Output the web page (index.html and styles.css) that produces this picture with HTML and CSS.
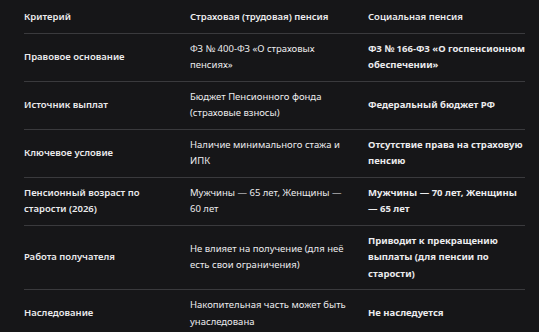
FILE: index.html
```html
<!DOCTYPE html>
<html lang="ru">
<head>
<meta charset="utf-8">
<link rel="stylesheet" href="styles.css">
</head>
<body>
<div class="wrap">
<table class="cmp">
<colgroup><col class="c1"><col class="c2"><col class="c3"></colgroup>
<thead>
<tr><th>Критерий</th><th>Страховая (трудовая) пенсия</th><th class="s">Социальная пенсия</th></tr>
</thead>
<tbody>
<tr><td class="k">Правовое основание</td><td>ФЗ № 400-ФЗ «О страховых пенсиях»</td><td class="s">ФЗ № 166-ФЗ «О госпенсионном обеспечении»</td></tr>
<tr><td class="k">Источник выплат</td><td>Бюджет Пенсионного фонда (страховые взносы)</td><td class="s">Федеральный бюджет РФ</td></tr>
<tr><td class="k">Ключевое условие</td><td>Наличие минимального стажа и ИПК</td><td class="s">Отсутствие права на страховую пенсию</td></tr>
<tr><td class="k">Пенсионный возраст по старости (2026)</td><td>Мужчины — 65 лет, Женщины — 60 лет</td><td class="s">Мужчины — 70 лет, Женщины — 65 лет</td></tr>
<tr><td class="k">Работа получателя</td><td>Не влияет на получение (для неё есть свои ограничения)</td><td class="s">Приводит к прекращению выплаты (для пенсии по старости)</td></tr>
<tr><td class="k">Наследование</td><td>Накопительная часть может быть унаследована</td><td class="s">Не наследуется</td></tr>
</tbody>
</table>
</div>
</body>
</html>
```
FILE: styles.css
```css
html, body {
  margin: 0;
  padding: 0;
  background: #161618;
}
.wrap {
  padding: 0 14px 0 24px;
}
.cmp {
  width: 501px;
  border-collapse: collapse;
  table-layout: fixed;
  font-family: "Noto Sans", "Open Sans", sans-serif;
  font-size: 9.5px;
  line-height: 16.5px;
  color: #ececee;
}
.c1 { width: 166px; }
.c2 { width: 178px; }
.c3 { width: 157px; }
.cmp th {
  text-align: left;
  font-weight: 600;
  padding: 9px 12px 7px 0;
  border-bottom: 1px solid #3a3a3d;
}
.cmp td {
  padding: 7px 14px 7px 0;
  vertical-align: middle;
  border-bottom: 1px solid #3a3a3d;
  font-weight: 400;
}
.cmp td.k { font-weight: 600; }
.cmp td.s { font-weight: 700; padding-right: 0; }
.cmp th.s { padding-right: 0; }
.cmp tbody tr:last-child td { border-bottom: none; }
```
